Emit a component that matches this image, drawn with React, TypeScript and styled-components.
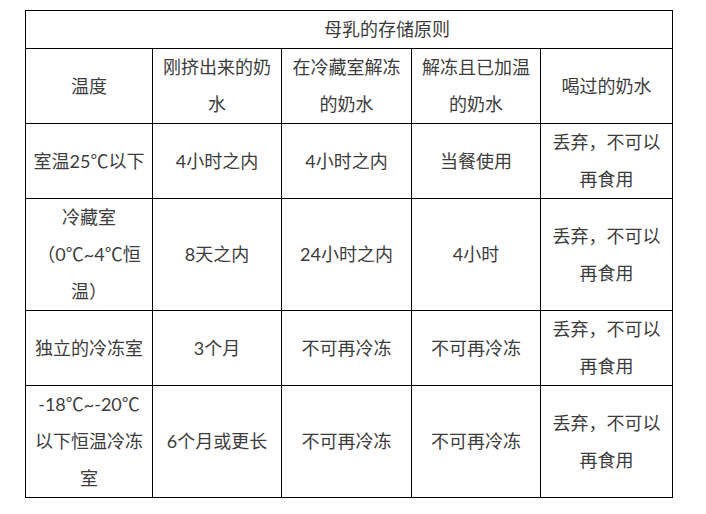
import React from "react";
import styled, { createGlobalStyle } from "styled-components";

const GlobalStyle = createGlobalStyle`
  html, body {
    margin: 0;
    padding: 0;
    background: #ffffff;
  }
  body {
    font-family: Lato, "Noto Sans CJK SC", sans-serif;
  }
`;

const Page = styled.div`
  width: 706px;
  height: 514px;
  padding: 10px 0 0 25px;
  box-sizing: border-box;
`;

const Table = styled.table`
  border-collapse: collapse;
  table-layout: fixed;
  width: 647px;
`;

const Col = styled.col<{ $w: number }>`
  width: ${(p) => p.$w}px;
`;

const Row = styled.tr<{ $h: number }>`
  height: ${(p) => p.$h}px;
`;

const Cell = styled.td`
  border: 1px solid #000;
  padding: 0 4px;
  text-align: center;
  vertical-align: middle;
  font-size: 18px;
  line-height: 37px;
  color: #3c3c3c;
  font-weight: 400;
`;

const TitleCell = styled(Cell)`
  text-align: left;
  padding-left: 298px;
`;

interface IRow {
  height: number;
  cells: string[][];
}

const header: IRow = {
  height: 75,
  cells: [
    ["温度"],
    ["刚挤出来的奶", "水"],
    ["在冷藏室解冻", "的奶水"],
    ["解冻且已加温", "的奶水"],
    ["喝过的奶水"],
  ],
};

const discard = ["丢弃，不可以", "再食用"];

const rows: IRow[] = [
  {
    height: 75,
    cells: [["室温25℃以下"], ["4小时之内"], ["4小时之内"], ["当餐使用"], discard],
  },
  {
    height: 112,
    cells: [["冷藏室", "（0℃~4℃恒", "温）"], ["8天之内"], ["24小时之内"], ["4小时"], discard],
  },
  {
    height: 75,
    cells: [["独立的冷冻室"], ["3个月"], ["不可再冷冻"], ["不可再冷冻"], discard],
  },
  {
    height: 112,
    cells: [
      ["-18℃~-20℃", "以下恒温冷冻", "室"],
      ["6个月或更长"],
      ["不可再冷冻"],
      ["不可再冷冻"],
      discard,
    ],
  },
];

const Lines = ({ lines }: { lines: string[] }) => (
  <>
    {lines.map((l, i) => (
      <React.Fragment key={i}>
        {i > 0 && <br />}
        {l}
      </React.Fragment>
    ))}
  </>
);

const App = () => {
  const all = [header, ...rows];
  return (
    <Page>
      <GlobalStyle />
      <Table>
        <colgroup>
          <Col $w={127} />
          <Col $w={129} />
          <Col $w={130} />
          <Col $w={129} />
          <Col $w={132} />
        </colgroup>
        <tbody>
          <Row $h={38}>
            <TitleCell colSpan={5}>母乳的存储原则</TitleCell>
          </Row>
          {all.map((r, i) => (
            <Row $h={r.height} key={i}>
              {r.cells.map((c, j) => (
                <Cell key={j}>
                  <Lines lines={c} />
                </Cell>
              ))}
            </Row>
          ))}
        </tbody>
      </Table>
    </Page>
  );
};

export default App;
